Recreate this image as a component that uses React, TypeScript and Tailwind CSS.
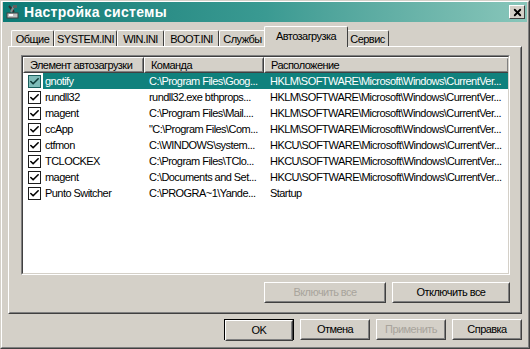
import { Check, X } from 'lucide-react';

type Row = { name: string; cmd: string; loc: string };

const rows: Row[] = [
  { name: 'gnotify', cmd: 'C:\\Program Files\\Goog...', loc: 'HKLM\\SOFTWARE\\Microsoft\\Windows\\CurrentVer...' },
  { name: 'rundll32', cmd: 'rundll32.exe bthprops...', loc: 'HKLM\\SOFTWARE\\Microsoft\\Windows\\CurrentVer...' },
  { name: 'magent', cmd: 'C:\\Program Files\\Mail....', loc: 'HKLM\\SOFTWARE\\Microsoft\\Windows\\CurrentVer...' },
  { name: 'ccApp', cmd: '"C:\\Program Files\\Com...', loc: 'HKLM\\SOFTWARE\\Microsoft\\Windows\\CurrentVer...' },
  { name: 'ctfmon', cmd: 'C:\\WINDOWS\\system...', loc: 'HKCU\\SOFTWARE\\Microsoft\\Windows\\CurrentVer...' },
  { name: 'TCLOCKEX', cmd: 'C:\\Program Files\\TClo...', loc: 'HKCU\\SOFTWARE\\Microsoft\\Windows\\CurrentVer...' },
  { name: 'magent', cmd: 'C:\\Documents and Set...', loc: 'HKCU\\SOFTWARE\\Microsoft\\Windows\\CurrentVer...' },
  { name: 'Punto Switcher', cmd: 'C:\\PROGRA~1\\Yande...', loc: 'Startup' },
];

// widths taken from the screenshot
const tabs: [string, string][] = [
  ['Общие', 'w-[43px]'],
  ['SYSTEM.INI', 'w-[63px]'],
  ['WIN.INI', 'w-[47px]'],
  ['BOOT.INI', 'w-[55px]'],
  ['Службы', 'w-[47px]'],
  ['Автозагрузка', 'w-[84px]'],
  ['Сервис', 'w-[43px]'],
];

function Button({ label, disabled, w }: { label: string; disabled?: boolean; w: string }) {
  return (
    <div
      className={`${w} h-[21px] border border-t-white border-l-white border-r-[#404040] border-b-[#404040] bg-[#d4d0c8]`}
    >
      <div
        className={`h-full flex items-center justify-center border border-transparent border-r-[#808080] border-b-[#808080] ${
          disabled ? 'text-[#a8a49c]' : 'text-black'
        }`}
      >
        {label}
      </div>
    </div>
  );
}

function Checkbox({ selected }: { selected?: boolean }) {
  return (
    <div
      className={`w-[13px] h-[13px] flex items-center justify-center border ${
        selected ? 'border-[#1a5e5c] bg-[#7fbcb9]' : 'border-[#1c1c1c] bg-white'
      }`}
    >
      <Check size={11} strokeWidth={3.5} className={selected ? 'text-[#103c3a]' : 'text-black'} />
    </div>
  );
}

export default function App() {
  return (
    <div
      className="w-[530px] h-[349px] bg-[#d4d0c8] border border-t-[#d4d0c8] border-l-[#d4d0c8] border-r-[#404040] border-b-[#404040] text-[11px] tracking-[-0.55px] text-black overflow-hidden"
      style={{ fontFamily: '"Liberation Sans", Arial, sans-serif' }}
    >
      <div className="h-full flex flex-col border border-t-white border-l-white border-r-[#808080] border-b-[#808080] px-[1px]">
        {/* title bar */}
        <div className="h-[20px] flex items-center bg-gradient-to-r from-[#0b7a75] via-[#3a9a92] to-[#88c6ba] pl-[2px] pr-[2px] shrink-0">
          <svg width="16" height="16" viewBox="0 0 16 16" className="mr-[3px]">
            <rect x="2" y="9" width="11" height="5" fill="#c0c0c0" stroke="#404040" strokeWidth="1" />
            <rect x="4" y="10" width="4" height="2" fill="#ffffff" />
            <path d="M4 2 L9 8" stroke="#303030" strokeWidth="2" />
            <path d="M9 2 L6 8" stroke="#8c8c8c" strokeWidth="2" />
            <rect x="8" y="1" width="4" height="3" fill="#606060" />
          </svg>
          <span className="text-white font-bold text-[14px] tracking-[0.3px]">Настройка системы</span>
          <div className="ml-auto w-[16px] h-[14px] bg-[#d4d0c8] border border-t-white border-l-white border-r-[#404040] border-b-[#404040] flex items-center justify-center">
            <X size={11} strokeWidth={4} className="text-black" />
          </div>
        </div>

        {/* tabs */}
        <div className="flex items-end pl-[8px] pr-[4px] mt-[4px] h-[21px] shrink-0">
          {tabs.map(([t, w]) => {
            const active = t === 'Автозагрузка';
            return (
              <div
                key={t}
                className={`${w} flex items-center justify-center border-l border-t border-r border-l-white border-t-white border-r-[#404040] rounded-t-[2px] ${
                  active ? 'h-[21px] -mx-[2px] relative z-10 bg-[#d4d0c8] pb-[2px]' : 'h-[17px] pt-[1px]'
                }`}
              >
                {t}
              </div>
            );
          })}
        </div>

        {/* panel */}
        <div className="mx-[5px] h-[268px] border border-t-white border-l-white border-r-[#404040] border-b-[#404040] shrink-0 -mt-[1px]">
          <div className="h-full border border-transparent border-r-[#808080] border-b-[#808080] flex flex-col pl-[11px] pr-[10px] pt-[7px]">
            {/* list */}
            <div className="h-[220px] border border-t-[#808080] border-l-[#808080] border-r-white border-b-white overflow-hidden">
              <div className="h-full border border-t-[#404040] border-l-[#404040] border-r-[#d4d0c8] border-b-[#d4d0c8] bg-white flex flex-col overflow-hidden">
                <div className="flex h-[16px] bg-[#d4d0c8] shrink-0">
                  {[
                    ['Элемент автозагрузки', 'w-[121px]'],
                    ['Команда', 'w-[120px]'],
                    ['Расположение', 'w-[245px]'],
                  ].map(([h, w]) => (
                    <div
                      key={h}
                      className={`${w} shrink-0 border border-t-white border-l-white border-r-[#404040] border-b-[#404040]`}
                    >
                      <div className="h-full flex items-center pl-[5px] border border-transparent border-r-[#808080] border-b-[#808080] whitespace-nowrap">
                        {h}
                      </div>
                    </div>
                  ))}
                </div>
                {rows.map((r, i) => {
                  const sel = i === 0;
                  return (
                    <div key={i} className="flex h-[16px] items-center">
                      <div className="w-[20px] pl-[5px] flex items-center shrink-0">
                        <Checkbox selected={sel} />
                      </div>
                      <div className={`flex flex-1 min-w-0 h-full items-center ${sel ? 'bg-[#10817d] text-white' : ''}`}>
                        <div className="w-[101px] shrink-0 pl-[2px] whitespace-nowrap">{r.name}</div>
                        <div className="w-[120px] shrink-0 pl-[5px] whitespace-nowrap overflow-hidden">{r.cmd}</div>
                        <div className="flex-1 min-w-0 pl-[6px] whitespace-nowrap overflow-hidden">{r.loc}</div>
                      </div>
                    </div>
                  );
                })}
              </div>
            </div>
            <div className="flex justify-end gap-[6px] mt-[7px]">
              <Button label="Включить все" disabled w="w-[122px]" />
              <Button label="Отключить все" w="w-[118px]" />
            </div>
          </div>
        </div>

        {/* bottom buttons */}
        <div className="flex justify-end gap-[6px] mt-[5px] pr-[5px]">
          <div className="w-[70px] h-[21px] border border-black">
            <Button label="OK" w="w-full" />
          </div>
          <Button label="Отмена" w="w-[70px]" />
          <Button label="Применить" disabled w="w-[70px]" />
          <Button label="Справка" w="w-[70px]" />
        </div>
      </div>
    </div>
  );
}
